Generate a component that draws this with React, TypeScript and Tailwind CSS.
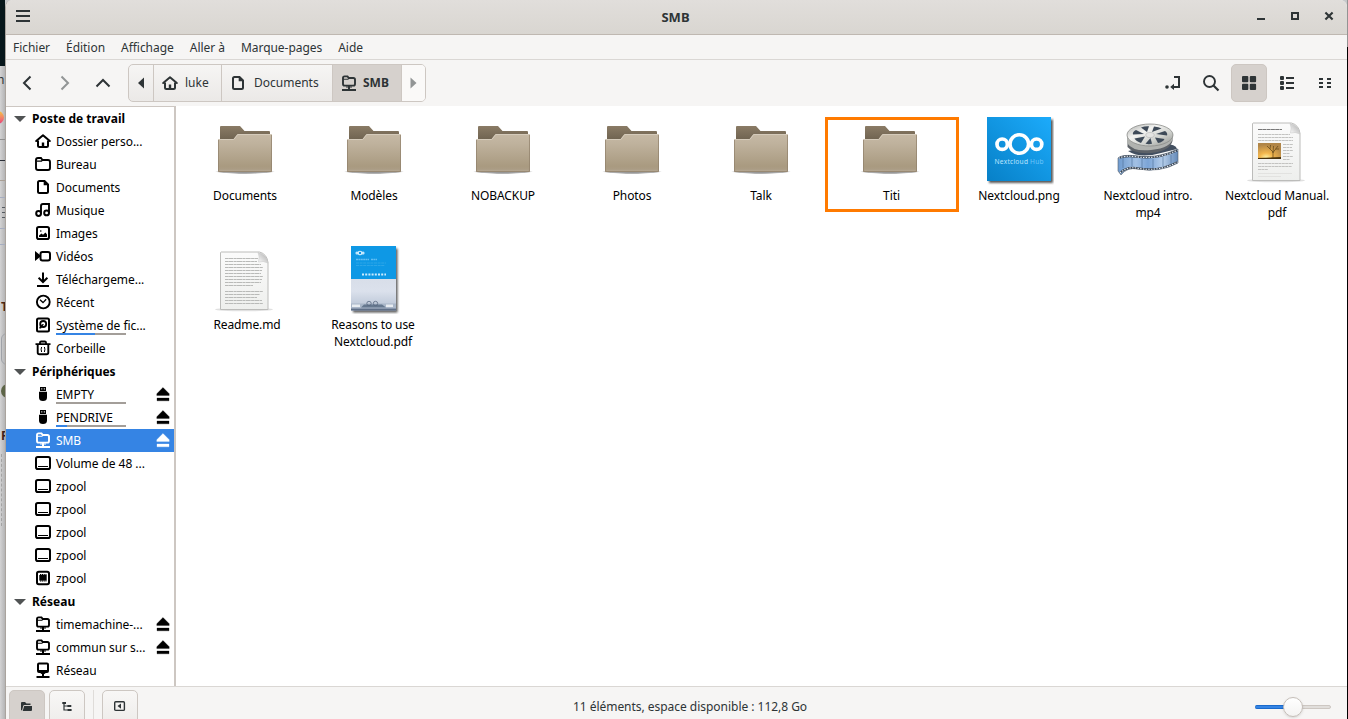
import React from "react";

type IconProps = { name: string; className?: string };

const glyphs: Record<string, React.ReactNode> = {
  home: (
    <>
      <path d="M1.2 8 L8 2.2 L14.8 8" fill="none" stroke="currentColor" strokeWidth="2" strokeLinejoin="round" strokeLinecap="round" />
      <path d="M3 7.5 V12.5 Q3 14 4.5 14 H11.5 Q13 14 13 12.5 V7.5" fill="none" stroke="currentColor" strokeWidth="2" />
      <path d="M6.8 13.5 V9.5 H9.2 V13.5 Z" fill="currentColor" />
    </>
  ),
  folder: (
    <>
      <path d="M1 4 Q1 2 3 2 H6 L7.5 4 H13 Q15 4 15 6 V12 Q15 14 13 14 H3 Q1 14 1 12 Z" fill="none" stroke="currentColor" strokeWidth="1.9" />
      <path d="M2 5.2 H6.5 L8 3.5" fill="none" stroke="currentColor" strokeWidth="1.3" />
    </>
  ),
  document: (
    <>
      <path d="M4.5 2 H9.5 L13 5.5 V12.5 Q13 14 11.5 14 H4.5 Q3 14 3 12.5 V3.5 Q3 2 4.5 2 Z" fill="none" stroke="currentColor" strokeWidth="2" />
      <path d="M8.7 2 V6.3 H13 Z" fill="currentColor" />
    </>
  ),
  music: (
    <>
      <circle cx="3.6" cy="11.5" r="2.4" fill="none" stroke="currentColor" strokeWidth="2" />
      <circle cx="11.6" cy="10.9" r="2.4" fill="none" stroke="currentColor" strokeWidth="2" />
      <path d="M6 11.5 V4 Q6 2 8 2 H14 V11" fill="none" stroke="currentColor" strokeWidth="1.9" />
    </>
  ),
  image: (
    <>
      <rect x="2" y="2" width="12" height="12" rx="1.8" fill="none" stroke="currentColor" strokeWidth="2" />
      <path d="M4 12 V10.5 L6.5 8.5 L8 9.8 L10.5 7.5 L12 9.5 V12 Z" fill="currentColor" />
      <circle cx="5.8" cy="6" r=".8" fill="currentColor" />
    </>
  ),
  video: (
    <>
      <path d="M0 3 L5 7 V9 L0 13 Z" fill="currentColor" />
      <rect x="5.5" y="4" width="9.5" height="8.5" rx="2" fill="none" stroke="currentColor" strokeWidth="2" />
    </>
  ),
  download: (
    <path d="M8 1.5 V11 M3.6 6.8 L8 11 L12.4 6.8 M2 15 H14" fill="none" stroke="currentColor" strokeWidth="2" />
  ),
  recent: (
    <>
      <circle cx="8.3" cy="8" r="6.4" fill="none" stroke="currentColor" strokeWidth="1.9" />
      <path d="M5 5.8 L8 8.6 L11.2 5.2" fill="none" stroke="currentColor" strokeWidth="1.3" />
    </>
  ),
  disk: (
    <>
      <rect x="2" y="1.5" width="12" height="13" rx="1.5" fill="none" stroke="currentColor" strokeWidth="2" />
      <circle cx="8.2" cy="7" r="3" fill="none" stroke="currentColor" strokeWidth="1.8" />
      <path d="M7 7.2 L9 7 L6 11.5 H4.4 V10 Z" fill="currentColor" />
    </>
  ),
  trash: (
    <>
      <path d="M.5 4.2 H15.5 M5 4 V2.6 Q5 1.5 6.2 1.5 H9.8 Q11 1.5 11 2.6 V4" fill="none" stroke="currentColor" strokeWidth="1.8" />
      <path d="M2.7 4.5 V12.5 Q2.7 14.3 4.5 14.3 H11.5 Q13.3 14.3 13.3 12.5 V4.5" fill="none" stroke="currentColor" strokeWidth="1.9" />
      <path d="M6.6 7 Q5.6 9 6.6 12 M9.4 7 Q10.4 9 9.4 12" fill="none" stroke="currentColor" strokeWidth="1" />
    </>
  ),
  usb: (
    <path d="M5 1 H11 V5 H5 Z M6.3 2.3 V3.5 H7.3 V2.3 Z M8.8 2.3 V3.5 H9.8 V2.3 Z M4 5.7 H12 V11.5 Q12 15 8 15 Q4 15 4 11.5 Z" fill="currentColor" fillRule="evenodd" />
  ),
  netfolder: (
    <>
      <path d="M2 3 Q2 1.4 3.5 1.4 H6.5 L7.8 3 H12.4 Q14 3 14 4.6 V9 Q14 10.6 12.4 10.6 H3.6 Q2 10.6 2 9 Z" fill="none" stroke="currentColor" strokeWidth="1.9" />
      <path d="M2 4.3 H7 L8 3" fill="none" stroke="currentColor" strokeWidth="1.1" />
      <path d="M8 11 V15 M1 15 H15" fill="none" stroke="currentColor" strokeWidth="2" />
      <path d="M5 12 H11" stroke="currentColor" strokeWidth="1" />
    </>
  ),
  drive: (
    <>
      <rect x="1" y="2" width="14" height="12" rx="1.8" fill="none" stroke="currentColor" strokeWidth="2" />
      <path d="M3 11.5 H13" stroke="currentColor" strokeWidth="1" />
    </>
  ),
  chip: (
    <>
      <rect x="2" y="1.7" width="12" height="12.6" rx="1.8" fill="none" stroke="currentColor" strokeWidth="2" />
      <rect x="4.3" y="5" width="7.4" height="5.6" fill="currentColor" />
      <path d="M5 4.5 H11.5 M5 11 H11.5" stroke="currentColor" strokeWidth="1.2" strokeDasharray="1.2 .6" />
    </>
  ),
  network: (
    <>
      <rect x="3" y="1.5" width="10" height="8.5" rx="1" fill="none" stroke="currentColor" strokeWidth="2" />
      <path d="M4 8 H12 V10 L9.5 12 H6.5 L4 10 Z" fill="currentColor" />
      <path d="M8 10 V15 M1.5 15 H14.5" stroke="currentColor" strokeWidth="2" />
    </>
  ),
  eject: (
    <path d="M8 1.5 L14.2 7.7 V9.6 H1.8 V7.7 Z M2 12 H14 V14.8 H2 Z" fill="currentColor" stroke="currentColor" strokeWidth=".3" />
  ),
  menu: <path d="M1 3 H15 M1 8 H15 M1 13 H15" stroke="currentColor" strokeWidth="2" />,
  minimize: <path d="M4 11 H12" stroke="currentColor" strokeWidth="2" />,
  maximize: <rect x="5" y="5" width="6" height="6" fill="none" stroke="currentColor" strokeWidth="2" />,
  close: <path d="M4.4 4.4 L11.6 11.6 M11.6 4.4 L4.4 11.6" stroke="currentColor" strokeWidth="2.1" />,
  back: <path d="M11.500 1.5 L5 8 L11.500 14.5" fill="none" stroke="currentColor" strokeWidth="2" />,
  forward: <path d="M4.500 1.5 L11 8 L4.500 14.5" fill="none" stroke="currentColor" strokeWidth="2" />,
  up: <path d="M1.5 11.5 L8 5 L14.5 11.5" fill="none" stroke="currentColor" strokeWidth="2" />,
  left: <path d="M11 2.5 L5 8 L11 13.5 Z" fill="currentColor" />,
  right: <path d="M4.500 2.5 L10.500 8 L4.500 13.5 Z" fill="currentColor" />,
  path: (
    <>
      <circle cx="2" cy="12" r="1.8" fill="currentColor" />
      <path d="M9 2 H14 V12 H7" fill="none" stroke="currentColor" strokeWidth="2" />
      <path d="M9 8.8 V15 L5.2 12 Z" fill="currentColor" />
    </>
  ),
  search: (
    <>
      <circle cx="6.5" cy="6.5" r="5.5" fill="none" stroke="currentColor" strokeWidth="1.9" />
      <path d="M10.5 10.5 L15.5 15.5" stroke="currentColor" strokeWidth="2.2" />
    </>
  ),
  grid: (
    <g fill="currentColor">
      <rect x="1" y="1" width="6.3" height="6.3" rx="1" />
      <rect x="8.8" y="1" width="6.3" height="6.3" rx="1" />
      <rect x="1" y="8.8" width="6.3" height="6.3" rx="1" />
      <rect x="8.8" y="8.8" width="6.3" height="6.3" rx="1" />
    </g>
  ),
  list: (
    <>
      <g fill="currentColor">
        <rect x="1" y="1" width="4" height="4" rx="1" />
        <rect x="1" y="6" width="4" height="4" rx="1" />
        <rect x="1" y="11" width="4" height="4" rx="1" />
      </g>
      <path d="M7 3 H15 M7 8 H15 M7 13 H15" stroke="currentColor" strokeWidth="2" />
    </>
  ),
  compact: (
    <path d="M2 4 H6 M2 8 H6 M2 12 H6 M10 4 H14 M10 8 H14 M10 12 H14" stroke="currentColor" strokeWidth="2" />
  ),
  places: (
    <path d="M2 12 V5 Q2 4 3 4 H6 L7.500 5.500 H11.500 V7 H5.500 Q4.500 7 4.200 8 L3 12.500 Z M5.200 8 H13 V12 Q13 13 12 13 H3.700 Z" fill="currentColor" />
  ),
  tree: (
    <>
      <path d="M5 4 V12 H9 M5 8 H8.500" fill="none" stroke="currentColor" strokeWidth="1.2" />
      <path d="M3.300 4 H7 V6 H3.300 Z M8.300 7 H12.300 V9 H8.300 Z M8.600 11 H12.600 V13 H8.600 Z" fill="currentColor" />
    </>
  ),
  sidebar: (
    <>
      <rect x="2.700" y="3.700" width="9.700" height="8.700" rx="1" fill="none" stroke="currentColor" strokeWidth="1.400" />
      <path d="M9 5.500 V10.800 L5.500 8.100 Z" fill="currentColor" />
    </>
  ),
};

function Icon({ name, className = "" }: IconProps) {
  return (
    <svg viewBox="0 0 16 16" className={`size-4 shrink-0 overflow-visible ${className}`}>
      {glyphs[name]}
    </svg>
  );
}

type Place = { icon: string; label: string; eject?: boolean; active?: boolean; usage?: number };

const sections: { title: string; items: Place[] }[] = [
  {
    title: "Poste de travail",
    items: [
      { icon: "home", label: "Dossier perso..." },
      { icon: "folder", label: "Bureau" },
      { icon: "document", label: "Documents" },
      { icon: "music", label: "Musique" },
      { icon: "image", label: "Images" },
      { icon: "video", label: "Vidéos" },
      { icon: "download", label: "Téléchargeme..." },
      { icon: "recent", label: "Récent" },
      { icon: "disk", label: "Système de fic...", usage: 56 },
      { icon: "trash", label: "Corbeille" },
    ],
  },
  {
    title: "Périphériques",
    items: [
      { icon: "usb", label: "EMPTY", eject: true, usage: 0 },
      { icon: "usb", label: "PENDRIVE", eject: true, usage: 15 },
      { icon: "netfolder", label: "SMB", eject: true, active: true },
      { icon: "drive", label: "Volume de 48 ..." },
      { icon: "drive", label: "zpool" },
      { icon: "drive", label: "zpool" },
      { icon: "drive", label: "zpool" },
      { icon: "drive", label: "zpool" },
      { icon: "chip", label: "zpool" },
    ],
  },
  {
    title: "Réseau",
    items: [
      { icon: "netfolder", label: "timemachine-...", eject: true },
      { icon: "netfolder", label: "commun sur s...", eject: true },
      { icon: "network", label: "Réseau" },
    ],
  },
];

function PlaceRow({ icon, label, eject, active, usage }: Place) {
  return (
    <li className={`flex h-[23px] items-start pl-[29px] pr-[3px] ${active ? "bg-[#3584e4] text-white" : "text-black"}`}>
      <Icon name={icon} className="mt-[3px]" />
      <span className="relative ml-[5px] flex-1 whitespace-nowrap leading-[23px] tracking-[-0.05px]">
        {label}
        {usage !== undefined && (
          <span className="absolute bottom-[2px] left-0 h-0.5 w-[70px] bg-[#a39e99]">
            <span className="block h-full bg-[#3584e4]" style={{ width: usage + "%" }} />
          </span>
        )}
      </span>
      {eject && <Icon name="eject" className="mt-[3px]" />}
    </li>
  );
}

function FolderArt() {
  return (
    <svg viewBox="212 117 66 66" className="size-[66px]">
      <defs>
        <linearGradient id="folderFront" x1="0" y1="0" x2="0" y2="1">
          <stop offset="0" stopColor="#c6b9a5" />
          <stop offset=".25" stopColor="#bfb29d" />
          <stop offset=".85" stopColor="#a99a80" />
          <stop offset="1" stopColor="#ad9f89" />
        </linearGradient>
        <linearGradient id="folderBack" x1="0" y1="0" x2="0" y2="1">
          <stop offset="0" stopColor="#8a7b65" />
          <stop offset="1" stopColor="#655a49" />
        </linearGradient>
        <radialGradient id="folderShadow">
          <stop offset="0" stopColor="#000" stopOpacity=".5" />
          <stop offset=".8" stopColor="#000" stopOpacity=".3" />
          <stop offset="1" stopColor="#000" stopOpacity="0" />
        </radialGradient>
      </defs>
      <ellipse cx="245" cy="171.7" rx="30" ry="2.3" fill="url(#folderShadow)" />
      <path d="M220 127 Q220 126 221 126 H240 L244.5 131 H269 Q270 131 270 132 V145 H220 Z" fill="url(#folderBack)" />
      <path d="M218 140 Q218 139 219 139 H233.5 L237.5 134 H271 Q272 134 272 135 V171 Q272 172 271 172 H219 Q218 172 218 171 Z" fill="url(#folderFront)" />
      <path d="M218.5 139.5 H233.8 L237.8 134.5 H271.5" fill="none" stroke="#d5cbbb" strokeWidth="1" />
      <path d="M218.5 140 V171.5 H271.5 V135" fill="none" stroke="#8f806a" strokeWidth=".7" />
      <path d="M219.5 170.3 H270.5" stroke="#b7ab97" strokeWidth=".7" />
    </svg>
  );
}

function LogoArt() {
  return (
    <svg viewBox="0 0 68 68" className="-mr-0.5 size-[68px]">
      <defs>
        <linearGradient id="hubBlue" x1="0" y1="1" x2="1" y2="0">
          <stop offset="0" stopColor="#0780c7" />
          <stop offset="1" stopColor="#1cabfb" />
        </linearGradient>
        <filter id="thumbShadow" x="-20%" y="-20%" width="140%" height="140%">
          <feGaussianBlur stdDeviation=".8" />
        </filter>
      </defs>
      <rect x="3" y="2.5" width="64" height="63.5" fill="#333" opacity=".8" filter="url(#thumbShadow)" />
      <rect x="1" y="0" width="64" height="64" fill="url(#hubBlue)" />
      <g fill="none" stroke="#fff">
        <circle cx="33.3" cy="27" r="9.3" strokeWidth="3.6" />
        <circle cx="16.2" cy="27.2" r="5.2" strokeWidth="3.7" />
        <circle cx="50.6" cy="27.2" r="5.2" strokeWidth="3.7" />
      </g>
      <text x="8.6" y="46.8" fontSize="6.600" textLength="49" lengthAdjust="spacing" fill="#bce4fd" fontFamily="Noto Sans, sans-serif">
        Nextcloud <tspan fill="#6cc5fa">Hub</tspan>
      </text>
    </svg>
  );
}

function VideoArt() {
  return (
    <svg viewBox="1115 117 66 66" className="size-[66px]">
      <defs>
        <linearGradient id="reelMetal" x1="0" y1="0" x2="1" y2="1">
          <stop offset="0" stopColor="#a8aaa7" />
          <stop offset=".35" stopColor="#f3f3f1" />
          <stop offset=".65" stopColor="#d0d2ce" />
          <stop offset="1" stopColor="#8f918e" />
        </linearGradient>
        <linearGradient id="filmBlue" x1="0" y1="0" x2="1" y2="0">
          <stop offset="0" stopColor="#6f9bcf" />
          <stop offset=".3" stopColor="#a2c0e4" />
          <stop offset=".5" stopColor="#7ba4d6" />
          <stop offset=".75" stopColor="#b6ceea" />
          <stop offset="1" stopColor="#6389b8" />
        </linearGradient>
      </defs>
      <path d="M1128 151 Q1140 159 1161 153 L1177 149 Q1176 144 1164 144 L1147 147 Z" fill="#424f60" />
      <path d="M1127.500 136 V147 Q1133 154 1151 153 Q1170 151 1172.500 141 V134 Z" fill="#5d6268" />
      <path d="M1127 137 V143 Q1133 152 1151 150 Q1172 148 1173 137 Z" fill="#b0b2af" />
      <ellipse cx="1150" cy="135" rx="23" ry="11" fill="url(#reelMetal)" stroke="#8b8d8a" strokeWidth=".8" />
      <g fill="#3e4a58">
        <path d="M1147 132 L1141 127.500 Q1145 126 1149 126.300 Z" />
        <path d="M1152 132 L1154 126.500 Q1159 127 1161.500 128.500 Z" />
        <path d="M1144 134 L1133 134.500 Q1132 132 1136 130 Z" />
        <path d="M1156 134 L1165 131 Q1168 133 1167 135.500 Z" />
        <path d="M1145 136.500 L1141 143 Q1136 141 1134.500 138.500 Z" />
        <path d="M1150.500 138 L1152 143.800 Q1149 144.500 1145.500 143.800 Z" />
        <path d="M1155 137.500 L1164.500 139 Q1163 142 1158 143 Z" />
      </g>
      <ellipse cx="1150" cy="135" rx="4.2" ry="2.5" fill="#e4e4e2" stroke="#aaa" strokeWidth=".5" />
      <path d="M1118 158 Q1122 154 1137 156 Q1156 159 1178 149 V163 Q1160 173 1138 169 Q1127 167 1121 175 L1118 171 Z" fill="url(#filmBlue)" stroke="#59616b" strokeWidth=".6" />
      <path d="M1119 158.2 Q1124 155.3 1137 156.8 Q1156 159.800 1177.5 150.3 M1120 173 Q1127 166 1138 168.300 Q1159 172 1177.5 162" fill="none" stroke="#3b4653" strokeWidth="1.900" />
      <path d="M1119 158.2 Q1124 155.3 1137 156.8 Q1156 159.800 1177.5 150.3 M1120 173 Q1127 166 1138 168.300 Q1159 172 1177.5 162" fill="none" stroke="#e6ecf3" strokeWidth="1.100" strokeDasharray="1.4 1.3" />
      <path d="M1123 158 V168 M1132 158 V166 M1142 159 V168 M1153 159 V168 M1163 157 V167 M1171 155 V164" stroke="#55759d" strokeWidth=".7" />
    </svg>
  );
}

function Sheet({ children }: { children: React.ReactNode }) {
  return (
    <svg viewBox="0 0 66 66" className="size-[66px]">
      <defs>
        <linearGradient id="paper" x1="0" y1="0" x2="0" y2="1">
          <stop offset="0" stopColor="#fbfbfb" />
          <stop offset="1" stopColor="#eeefed" />
        </linearGradient>
        <linearGradient id="curl" x1="0" y1="1" x2="1" y2="0">
          <stop offset="0" stopColor="#fff" />
          <stop offset=".5" stopColor="#d3d3d3" />
          <stop offset="1" stopColor="#aaa" />
        </linearGradient>
      </defs>
      <ellipse cx="32" cy="63.5" rx="29" ry="1.8" fill="#000" opacity=".12" />
      <path d="M9 6 H47.5 Q55 8 56 16.5 V63.5 H8.5 V6.5 Z" fill="url(#paper)" stroke="#bcbcba" strokeWidth="1" />
      <path d="M46 6.5 Q48 11 46.5 16 Q51 14.5 56 17 Q54.5 8 46 6.5 Z" fill="url(#curl)" stroke="#c4c4c4" strokeWidth=".5" />
      {children}
    </svg>
  );
}

function ReadmeArt() {
  const ends = [46, 45, 49, 51, 50, 49, 51, 50, 49, 41, 0, 51, 48, 45, 50, 51];
  return (
    <Sheet>
      {ends.map((end, i) =>
        end ? <path key={i} d={`M13 ${12.5 + i * 3} H${end}`} stroke="#b9bab8" strokeWidth="1" strokeDasharray="3 .3 5 .4" /> : null,
      )}
    </Sheet>
  );
}

function ManualArt() {
  return (
    <Sheet>
      <path d="M14 12.5 H38" stroke="#777" strokeWidth="1" strokeDasharray="4 .3" />
      <path d="M14 17.5 H46 M14 20.5 H49 M14 23.5 H49 M39 27.5 H49 M39 30.5 H48 M39 33.5 H49 M39 36.5 H46 M39 39.5 H49 M39 42.5 H46 M14 46.5 H49 M14 49.5 H48 M14 52.5 H24" stroke="#c3c3c1" strokeWidth="1" strokeDasharray="3 .4" />
      <path d="M14 56.5 H48 M14 59.5 H37" stroke="#e2e2e0" strokeWidth="1" />
      <defs>
        <radialGradient id="sunset" cx=".35" cy=".9" r=".8">
          <stop offset="0" stopColor="#fff0a0" />
          <stop offset=".35" stopColor="#f3b64d" />
          <stop offset="1" stopColor="#b08547" />
        </radialGradient>
      </defs>
      <rect x="14" y="26" width="23" height="16" fill="url(#sunset)" />
      <path d="M14 41 L37 40 V42 H14 Z" fill="#49330f" />
      <path d="M29 41 V35 L23 29 M29 36 L29.500 29 M29 35.5 L34 29 M26 32 L26.5 28 M31.5 32 H35" stroke="#5b4319" strokeWidth=".7" fill="none" />
    </Sheet>
  );
}

function BrochureArt() {
  return (
    <svg viewBox="0 0 66 68" className="h-[68px] w-[66px]">
      <defs>
        <linearGradient id="desk" x1="0" y1="0" x2="0" y2="1">
          <stop offset="0" stopColor="#d0d6e0" />
          <stop offset=".7" stopColor="#dbe1ec" />
          <stop offset="1" stopColor="#b4c0d2" />
        </linearGradient>
      </defs>
      <rect x="12" y="2.5" width="44.5" height="64" fill="#444" opacity=".9" filter="url(#thumbShadow)" />
      <rect x="10" width="45" height="64.5" fill="url(#desk)" />
      <rect x="10" width="45" height="33" fill="#0e98e5" />
      <g fill="none" stroke="#d8f1ff" strokeWidth="1.100">
        <circle cx="19" cy="7" r="1.8" />
        <circle cx="16" cy="7" r="1" />
        <circle cx="22" cy="7" r="1" />
      </g>
      <path d="M15 13.5 H28 M30 13.5 H36" stroke="#61bdf2" strokeWidth="1.3" strokeDasharray="2 .4" />
      <path d="M15 17 H45 M15 19.5 H44" stroke="#36a9e9" strokeWidth=".8" strokeDasharray="3 .6" />
      <path d="M21 28.5 H45" stroke="#cdebfd" strokeWidth="2" strokeDasharray="2 1.2" />
      <path d="M10 57.500 H55 V62 H10 Z" fill="#a9b6c8" />
      <path d="M10 62.500 H55 V64.500 H10 Z" fill="#5f6f87" />
      <path d="M11 58.500 H19 V61 H11 Z M45 58.500 H52 V61 H45 Z" fill="#e8ecf1" />
      <path d="M23 58.500 H41 L45 61.5 H20 Z" fill="#66788f" />
      <circle cx="28" cy="57.500" r="2.2" fill="none" stroke="#5a6a82" strokeWidth=".8" />
      <circle cx="34.5" cy="57.500" r="2.2" fill="none" stroke="#5a6a82" strokeWidth=".8" />
    </svg>
  );
}

const files: { label: string[]; art: React.ReactNode; framed?: boolean; shift?: string }[] = [
  { label: ["Documents"], art: <FolderArt /> },
  { label: ["Modèles"], art: <FolderArt /> },
  { label: ["NOBACKUP"], art: <FolderArt /> },
  { label: ["Photos"], art: <FolderArt /> },
  { label: ["Talk"], art: <FolderArt /> },
  { label: ["Titi"], art: <FolderArt />, framed: true, shift: "pl-[3px]" },
  { label: ["Nextcloud.png"], art: <LogoArt /> },
  { label: ["Nextcloud intro.", "mp4"], art: <VideoArt /> },
  { label: ["Nextcloud Manual.", "pdf"], art: <ManualArt /> },
  { label: ["Readme.md"], art: <ReadmeArt />, shift: "pl-[4px]" },
  { label: ["Reasons to use", "Nextcloud.pdf"], art: <BrochureArt />, shift: "pr-[2px]" },
];

const windowIcons = ["minimize", "maximize", "close"];
const menus = ["Fichier", "Édition", "Affichage", "Aller à", "Marque-pages", "Aide"];

function BackgroundStrip() {
  return (
    <div className="flex w-[5px] shrink-0 flex-col overflow-hidden bg-gradient-to-r from-[#d3d3d4] to-[#b4b4b5]">
      <div className="h-[66px] shrink-0 bg-[#07171b]" />
      <div className="-ml-[3px] mt-1 h-5 shrink-0 leading-5">h</div>
      <div className="-ml-[9px] mt-[21px] h-[13px] w-[13px] shrink-0 rounded-full bg-gradient-to-b from-[#f6c333] to-[#e8337a]" />
      <div className="mt-[15px] h-px shrink-0 bg-[#8f8f8f]" />
      <div className="mt-5 h-px shrink-0 bg-[#2c3038]" />
      <div className="mt-[19px] h-px shrink-0 bg-[#a99f95]" />
      <div className="mt-4 h-px shrink-0 bg-[#a6adc0]" />
      <div className="ml-0.5 mt-[9px] h-px shrink-0 bg-[#555a60]" />
      <div className="ml-0.5 mt-1 h-px shrink-0 bg-[#555a60]" />
      <div className="ml-0.5 mt-1 h-px shrink-0 bg-[#555a60]" />
      <div className="mt-[10px] h-px shrink-0 bg-[#a6adc0]" />
      <div className="mt-[15px] h-px shrink-0 bg-[#a6adc0]" />
      <div className="ml-px mt-[52px] h-5 shrink-0 font-bold leading-5 text-[#4a2414]">T</div>
      <div className="ml-px mt-4 h-8 w-4 shrink-0 rounded-[6px] border border-[#9fa2a8]" />
      <div className="ml-px mt-[19px] size-[14px] shrink-0 rounded-full bg-[#5d6547]" />
      <div className="ml-px mt-7 h-5 shrink-0 font-bold leading-5 text-[#3b2218]">F</div>
      <div className="ml-px mt-2 h-[72px] shrink-0 border-l border-dashed border-[#a3a3a3]" />
    </div>
  );
}

export default function App() {
  return (
    <div className="flex h-[719px] w-[1348px] overflow-hidden bg-[#c6c8ca] font-['Noto_Sans',sans-serif] text-[12px] text-[#2e3436]">
      <BackgroundStrip />
      <main className="flex w-[1342px] shrink-0 flex-col overflow-hidden rounded-t-[7px] border-l border-[#aaa49e] bg-[#f6f5f4]">
        <header className="flex h-[35px] shrink-0 items-center border-b border-[#bfb8b1] bg-gradient-to-b from-[#e1dedb] to-[#d9d6d1] pb-[2px] pl-[9px] pr-[10px]">
          <Icon name="menu" />
          <h1 className="flex-1 pl-[67px] pt-[3px] text-center text-[13px] font-bold">SMB</h1>
          <div className="flex gap-[18px]">
            {windowIcons.map((name) => (
              <Icon key={name} name={name} />
            ))}
          </div>
        </header>
        <nav className="flex h-[25px] shrink-0 items-center gap-4 border-b border-[#dad7d4] pl-[7px] pt-[2px] tracking-[-0.04px]">
          {menus.map((m) => (
            <span key={m}>{m}</span>
          ))}
        </nav>
        <div className="flex h-[46px] shrink-0 items-center pl-[13px] pr-1">
          <div className="flex gap-[22px]">
            <Icon name="back" />
            <Icon name="forward" className="text-[#929595]" />
            <Icon name="up" />
          </div>
          <div className="ml-[17px] flex h-[38px] overflow-hidden rounded-[5px] border border-[#cdc7c2] bg-gradient-to-b from-[#f6f5f4] to-[#ebe9e7]">
            <div className="flex w-[25px] items-center justify-center border-r border-[#cdc7c2]">
              <Icon name="left" />
            </div>
            <div className="flex w-[68px] items-center gap-[7px] border-r border-[#cdc7c2] pl-2">
              <Icon name="home" />
              luke
            </div>
            <div className="flex w-[111px] items-center gap-2 border-r border-[#cdc7c2] pl-2">
              <Icon name="document" />
              Documents
            </div>
            <div className="flex w-[69px] items-center gap-[6px] border-r border-[#cdc7c2] bg-[#d6d1cd] pl-2 font-bold">
              <Icon name="netfolder" />
              SMB
            </div>
            <div className="flex w-[23px] items-center justify-center bg-[#faf9f8] text-[#929595]">
              <Icon name="right" />
            </div>
          </div>
          <div className="ml-auto flex gap-0.5">
            {["path", "search", "grid", "list", "compact"].map((name) => (
              <button
                key={name}
                className={`flex h-[38px] w-9 items-center justify-center rounded-[5px] border ${name === "grid" ? "border-[#cdc7c2] bg-[#d6d1cd]" : "border-transparent"}`}
              >
                <Icon name={name} />
              </button>
            ))}
          </div>
        </div>
        <div className="flex min-h-0 flex-1">
          <aside className="w-[170px] shrink-0 border-r-2 border-t border-[#cdc7c2] bg-white">
            {sections.map((s) => (
              <section key={s.title}>
                <h2 className="flex h-[23px] items-center gap-[6px] pl-2 font-bold text-black">
                  <svg viewBox="0 0 12 6" className="h-1.5 w-3">
                    <path d="M0 0 H12 L6 6 Z" fill="#505354" />
                  </svg>
                  {s.title}
                </h2>
                <ul>
                  {s.items.map((item, i) => (
                    <PlaceRow key={i} {...item} />
                  ))}
                </ul>
              </section>
            ))}
          </aside>
          <section className="grid flex-1 auto-rows-[129px] grid-cols-[repeat(9,129px)] content-start bg-white pl-[4px] pt-[11px] text-black">
            {files.map((f) => (
              <figure key={f.label[0]} className="relative flex flex-col items-center">
                <div className="h-[70px]">{f.art}</div>
                <figcaption className={`translate-x-[0.5px] whitespace-nowrap text-center leading-[17px] tracking-[-0.1px] ${f.shift ?? ""}`}>
                  {f.label.map((l) => (
                    <div key={l}>{l}</div>
                  ))}
                </figcaption>
                {f.framed && <div className="absolute left-0 top-0 h-[95px] w-[134px] border-[3px] border-[#ff7a00]" />}
              </figure>
            ))}
          </section>
        </div>
        <footer className="flex h-[33px] shrink-0 items-start overflow-hidden border-t border-[#dad7d4] pl-[3px] pr-4 pt-[3px]">
          <div className="flex h-[38px] w-9 justify-center rounded-[5px] border border-[#cdc7c2] bg-[#d6d1cd] pt-[7px]">
            <Icon name="places" />
          </div>
          <div className="ml-1 flex h-[38px] w-9 justify-center rounded-[5px] border border-[#cdc7c2] bg-gradient-to-b from-[#f8f7f6] to-[#edebe9] pt-[7px]">
            <Icon name="tree" />
          </div>
          <div className="ml-2 h-9 w-px bg-[#dfdcd9]" />
          <div className="ml-2 flex h-[38px] w-9 justify-center rounded-[5px] border border-[#cdc7c2] bg-gradient-to-b from-[#f8f7f6] to-[#edebe9] pt-[7px]">
            <Icon name="sidebar" />
          </div>
          <p className="flex-1 pr-[13px] pt-px text-center leading-8 tracking-[-0.03px]">11 éléments, espace disponible : 112,8 Go</p>
          <div className="relative mt-[15px] flex h-1 w-[76px] overflow-visible rounded-full border border-[#cdc7c2] bg-[#e1dedb]">
            <div className="-my-px -ml-px h-1 w-[38px] rounded-full border-y border-[#1b6acb] bg-[#3584e4]" />
            <div className="absolute -top-[9px] left-[27px] size-5 rounded-full border border-[#c5beb8] bg-gradient-to-b from-white to-[#f4f3f2] shadow-sm" />
          </div>
        </footer>
      </main>
      <div className="w-px shrink-0 bg-gradient-to-b from-[#939393] from-[47px] to-black to-[47px]" />
    </div>
  );
}
